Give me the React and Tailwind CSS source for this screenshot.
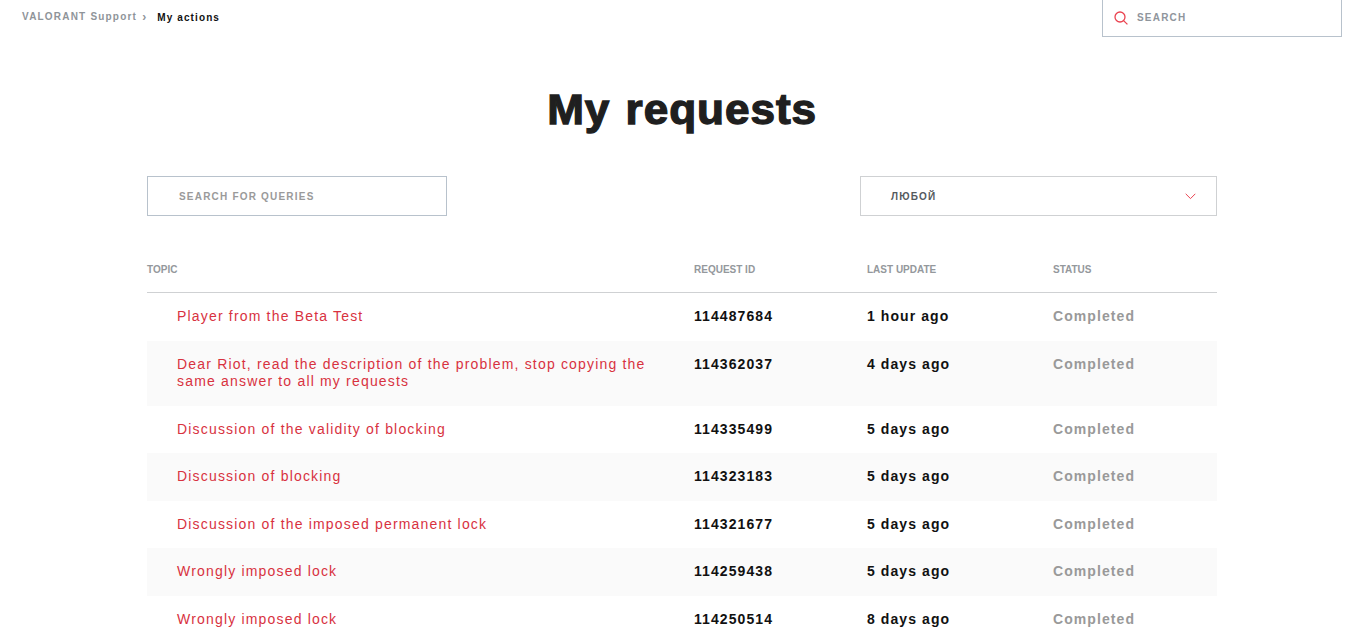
const rows = [
  { topic: "Player from the Beta Test", id: "114487684", updated: "1 hour ago" },
  { topic: "Dear Riot, read the description of the problem, stop copying the same answer to all my requests", id: "114362037", updated: "4 days ago" },
  { topic: "Discussion of the validity of blocking", id: "114335499", updated: "5 days ago" },
  { topic: "Discussion of blocking", id: "114323183", updated: "5 days ago" },
  { topic: "Discussion of the imposed permanent lock", id: "114321677", updated: "5 days ago" },
  { topic: "Wrongly imposed lock", id: "114259438", updated: "5 days ago" },
  { topic: "Wrongly imposed lock", id: "114250514", updated: "8 days ago" },
];

const App = () => {
  return (
    <div className="h-screen overflow-hidden bg-white font-['Liberation_Sans',Arial,sans-serif]">
      {/* Top bar */}
      <div className="flex justify-between pl-[22px] pr-[19px]">
        <div className="flex items-start pt-[11px] text-[10px] leading-[11px] font-bold tracking-[1.2px]">
          <span className="text-[#8f9499]">VALORANT Support</span>
          <span className="ml-[5px] mt-[1px] text-[12px] text-[#8f9499]">›</span>
          <span className="ml-[10px] mt-[1px] text-[#111111] tracking-[1.1px]">My actions</span>
        </div>
        <div className="flex h-[37px] w-[240px] items-center border border-t-0 border-[#b8c2cc] pl-[11px]">
          <svg className="h-[14px] w-[14px] text-[#ea4350]" viewBox="0 0 14 14" fill="none" stroke="currentColor" strokeWidth="1.3">
            <circle cx="6" cy="6" r="5" />
            <path d="M9.6 9.6 13.4 13.4" />
          </svg>
          <span className="ml-[9px] -mt-px text-[10px] font-bold tracking-[1.2px] text-[#8f959c]">SEARCH</span>
        </div>
      </div>

      <h1 className="mt-[46px] pl-[3px] text-center text-[42px] leading-[54px] font-bold tracking-[0.9px] [word-spacing:2px] scale-x-[1.05] text-[#1f1f1f] [-webkit-text-stroke:1.3px_#1f1f1f]">
        My requests
      </h1>

      <div className="ml-[147px] mt-[39px] w-[1070px]">
        {/* Filters */}
        <div className="flex justify-between">
          <div className="flex h-[40px] w-[300px] items-center border border-[#b8c2cc] pl-[31px] text-[10px] font-bold tracking-[1.2px] text-[#9a9a9a]">
            SEARCH FOR QUERIES
          </div>
          <div className="flex h-[40px] w-[357px] items-center justify-between border border-[#cfd1d3] pl-[30px] pr-[20px]">
            <span className="text-[10px] font-bold tracking-[1.2px] text-[#555a5e]">ЛЮБОЙ</span>
            <svg className="h-[7px] w-[11px]" viewBox="0 0 11 7" fill="none" stroke="#ea4350" strokeWidth="1">
              <path d="M.7.8 5.5 5.6 10.3.8" />
            </svg>
          </div>
        </div>

        {/* Table header */}
        <div className="mt-[48px] grid h-[29px] grid-cols-[547px_173px_186px_164px] border-b border-[#cfd1d3] text-[10px] leading-[11px] font-bold text-[#94989c]">
          <span>TOPIC</span>
          <span>REQUEST ID</span>
          <span>LAST UPDATE</span>
          <span>STATUS</span>
        </div>

        {/* Table rows */}
        {rows.map((row, i) => (
          <div
            key={i}
            className="grid grid-cols-[547px_173px_186px_164px] py-[15px] text-[14px] leading-[17.5px] tracking-[1.08px] odd:bg-white even:bg-[#fafafa]"
          >
            <span className="pl-[30px] pr-[30px] tracking-[1.18px] text-[#d8323f]">{row.topic}</span>
            <span className="font-bold text-[#111111]">{row.id}</span>
            <span className="font-bold text-[#111111]">{row.updated}</span>
            <span className="font-bold text-[#999999]">Completed</span>
          </div>
        ))}
      </div>
    </div>
  );
};

export default App;
